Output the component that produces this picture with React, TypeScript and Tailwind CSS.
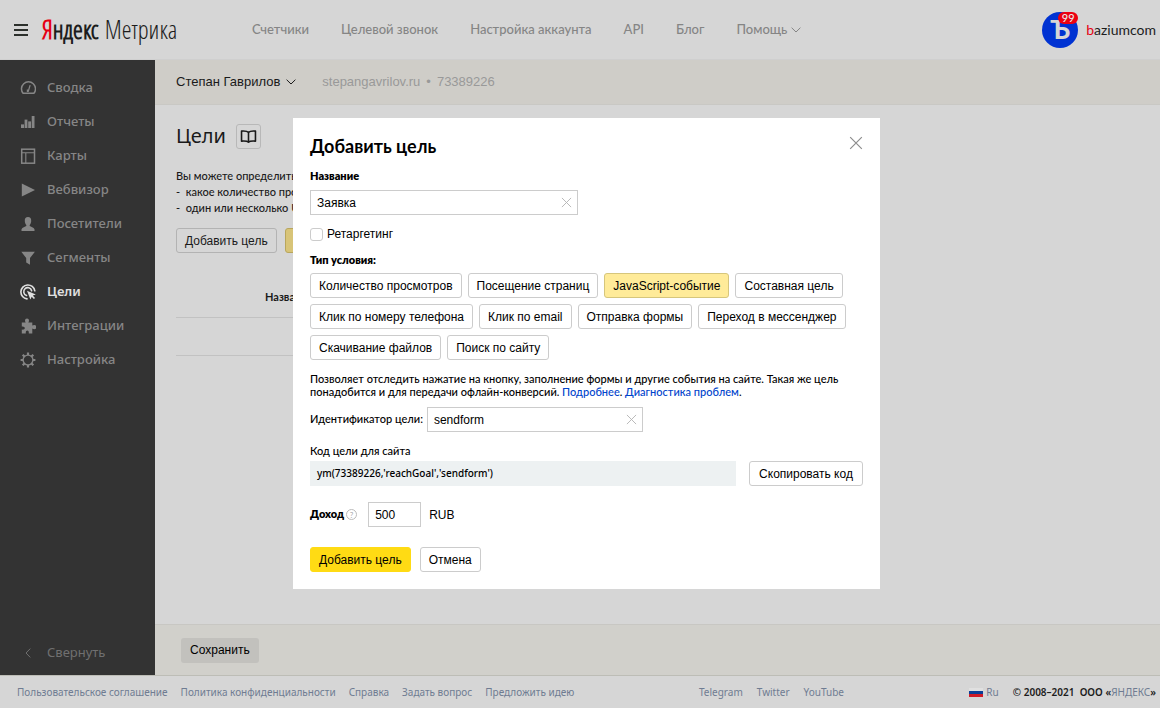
import React, { useState } from "react";

const noto = "font-['Noto_Sans','Open_Sans',sans-serif]";
const lato = "font-['Lato','Noto_Sans',sans-serif]";
const arial = "font-['Liberation_Sans',Arial,sans-serif]";

function Chevron({ className }: { className: string }) {
  return (
    <svg viewBox="0 0 10 6" fill="none" stroke="currentColor" className={className} aria-hidden="true">
      <path d="M0.6 0.7 5 5 9.4 0.7" />
    </svg>
  );
}

function Cross({ className }: { className: string }) {
  return (
    <svg viewBox="0 0 12 12" fill="none" stroke="currentColor" className={className} aria-hidden="true">
      <path d="M1 1 11 11M11 1 1 11" />
    </svg>
  );
}

const icons: Record<string, React.ReactNode> = {
  gauge: (
    <g fill="none" stroke="currentColor">
      <path d="M3.1 13.300A7 7 0 1 1 13.900 13.300Z" strokeWidth="1.5" strokeLinejoin="round" />
      <path d="M10 5.500 8.200 11.500" strokeWidth="1.2" strokeLinecap="round" />
      <path d="M7.400 9.400V12" strokeWidth="1.2" />
    </g>
  ),
  bars: (
    <g fill="currentColor">
      <rect x="1" y="10.400" width="3" height="3.600" />
      <rect x="4.600" y="5.600" width="2.800" height="8.400" />
      <rect x="8.200" y="7.400" width="2.800" height="6.600" />
      <rect x="11.700" y="2" width="2.800" height="12" />
    </g>
  ),
  layout: (
    <g fill="none" stroke="currentColor">
      <rect x="1.700" y="1.200" width="12.800" height="14" strokeWidth="1.500" />
      <path d="M1.700 4.800H14.500M5.800 4.800V15" strokeWidth="1.100" />
    </g>
  ),
  play: <path d="M1.8 1.4 15 8 1.8 14.6Z" fill="currentColor" />,
  person: (
    <path
      d="M8 1C5.8 1 4.6 2.5 4.8 5c.1 1.700.6 3 1.500 3.900v1.200c-1 .9-4.100 1.200-4.800 3.200V15h13v-1.700c-.7-2-3.800-2.300-4.800-3.200V8.900c.9-.9 1.400-2.200 1.500-3.900C11.400 2.500 10.200 1 8 1Z"
      fill="currentColor"
    />
  ),
  funnel: <path d="M1.300 1.800H14.900L10 8V14.800L6.200 12.500V8Z" fill="currentColor" />,
  target: (
    <g fill="none" stroke="currentColor" strokeWidth="1.6">
      <path d="M14.800 6.800A7 7 0 1 0 7 14.900" strokeLinecap="round" />
      <path d="M11.600 6.700A4 4 0 1 0 6.500 11.500" strokeLinecap="round" />
      <path d="M7 6.800 15.800 10.500 12.800 11.600 15 14 13.900 15 11.700 12.800 10.400 15.600Z" fill="currentColor" stroke="none" />
    </g>
  ),
  puzzle: (
    <path
      d="M1.800 4.400H5.700C5.200 3.700 5 3.100 5 2.500A2 2 0 0 1 9 2.500C9 3.100 8.800 3.700 8.300 4.400H12.300V7.500C13 7.200 13.500 7 14.200 7A2.100 2.100 0 0 1 14.200 11.200C13.500 11.200 13 11 12.300 10.600V15.500H8.800C9 13.500 8.300 12.600 7.300 12.600S5.600 13.500 5.800 15.500H1.800V11.600C3.700 11.900 4.800 11.200 4.800 10.100S3.700 8.200 1.800 8.500Z"
      fill="currentColor"
    />
  ),
  gear: (
    <g stroke="currentColor" fill="none">
      <circle cx="8" cy="8" r="4.900" strokeWidth="1.400" />
      <path
        d="M8 3V.6M8 13V15.400M3 8H.6M13 8H15.400M4.500 4.500 2.700 2.700M11.500 4.500 13.300 2.700M4.500 11.500 2.700 13.300M11.500 11.500 13.300 13.300"
        strokeWidth="2.200"
      />
    </g>
  ),
};

const menu = [
  { icon: "gauge", label: "Сводка" },
  { icon: "bars", label: "Отчеты" },
  { icon: "layout", label: "Карты" },
  { icon: "play", label: "Вебвизор" },
  { icon: "person", label: "Посетители" },
  { icon: "funnel", label: "Сегменты" },
  { icon: "target", label: "Цели", active: true },
  { icon: "puzzle", label: "Интеграции" },
  { icon: "gear", label: "Настройка" },
];

const conditions = [
  "Количество просмотров",
  "Посещение страниц",
  "JavaScript-событие",
  "Составная цель",
  "Клик по номеру телефона",
  "Клик по email",
  "Отправка формы",
  "Переход в мессенджер",
  "Скачивание файлов",
  "Поиск по сайту",
];

const button = "h-[25px] shrink-0 whitespace-nowrap rounded-[3px] border px-2 text-[12px] leading-none " + arial;
const field = "h-[25px] border border-[#ccc] bg-white px-1.5 text-[12px] text-black outline-none " + arial;

function ClearableField(props: { id: string; value: string; onChange: (v: string) => void; width: string; clear: string }) {
  return (
    <div className={"relative " + props.width}>
      <input
        id={props.id}
        value={props.value}
        onChange={(e) => props.onChange(e.target.value)}
        className={field + " w-full"}
      />
      <button
        type="button"
        aria-label={props.clear}
        onClick={() => props.onChange("")}
        className="absolute inset-y-0 right-1.5 flex items-center text-[#b3b3b3]"
      >
        <Cross className="size-[11px]" />
      </button>
    </div>
  );
}

function Header() {
  return (
    <header className="flex h-[60px] shrink-0 items-center border-b border-[#cfcfcf] bg-[#d6d6d6] pl-3.5 pr-1">
      <button type="button" aria-label="Меню" className="flex w-3.5 flex-col gap-[3px]">
        <span className="h-0.5 bg-[#2c302c]" />
        <span className="h-0.5 bg-[#2c302c]" />
        <span className="h-0.5 bg-[#2c302c]" />
      </button>
      <a
        href="#"
        className="ml-3.5 flex w-[210px] gap-1.5 whitespace-nowrap pb-0.5 font-['Open_Sans_Condensed_Light','Open_Sans_Condensed',sans-serif] text-[25px] leading-8 text-[#1c1c1c]"
      >
        <span className="font-bold">
          <span className="text-[#e60012]">Я</span>ндекс
        </span>
        <span>Метрика</span>
      </a>
      <nav className="flex items-center gap-8 whitespace-nowrap text-[13px] font-medium text-[#858585]">
        <a href="#">Счетчики</a>
        <a href="#">Целевой звонок</a>
        <a href="#">Настройка аккаунта</a>
        <a href="#">API</a>
        <a href="#">Блог</a>
        <a href="#" className="flex items-center gap-1">
          Помощь
          <Chevron className="h-1.5 w-2.5" />
        </a>
      </nav>
      <a href="#" className="ml-auto flex items-center gap-2 text-[14px] text-[#1c1c1c]">
        <span className="relative flex size-9 items-center justify-center rounded-full bg-[#0032d2]">
          <span className="font-['Roboto',sans-serif] text-[26px] font-bold leading-none text-[#d6d6d6]">Ъ</span>
          <span className="absolute right-0 top-0 flex h-3 w-5 items-center justify-center rounded-full bg-[#ec0010] text-[11px] font-medium leading-none text-[#e8e8e8]">
            99
          </span>
        </span>
        <span>
          <span className="text-[#e60012]">b</span>aziumcom
        </span>
      </a>
    </header>
  );
}

function Sidebar() {
  return (
    <aside className={"flex w-[155px] shrink-0 flex-col bg-[#333] pt-[11px] text-[13px] font-medium text-[#868686] " + noto}>
      <nav className="flex flex-col">
        {menu.map((m) => (
          <a
            key={m.label}
            href="#"
            className={"flex h-[34px] items-center gap-[11px] pl-5 " + (m.active ? "font-semibold text-[#e0e0e0]" : "")}
          >
            <svg viewBox="0 0 16 16" className="size-4" aria-hidden="true">
              {icons[m.icon]}
            </svg>
            {m.label}
          </a>
        ))}
      </nav>
      <button type="button" className="mt-auto flex h-11 items-center gap-[11px] pl-5 font-normal text-[#707070]">
        <span className="flex w-4 justify-center">
          <Chevron className="h-1.5 w-2.5 rotate-90" />
        </span>
        Свернуть
      </button>
    </aside>
  );
}

function Goals() {
  return (
    <main className="flex min-w-0 flex-1 flex-col">
      <div className={"flex h-[45px] items-center gap-[26px] border-b border-[#c9c8c4] bg-[#cfcdc8] px-[21px] " + arial}>
        <button type="button" className="flex items-center gap-1.5 text-[13px] text-[#1a1a1a]">
          Степан Гаврилов
          <Chevron className="h-1.5 w-2.5" />
        </button>
        <span className="flex gap-1.5 text-[13px] text-[#999]">
          <span>stepangavrilov.ru</span>
          <span>•</span>
          <span>73389226</span>
        </span>
      </div>
      <section className="flex max-w-[700px] flex-1 flex-col items-start px-[21px] pt-4 text-[#1a1a1a]">
        <div className="flex items-center gap-2.5">
          <h1 className={"text-[20px] leading-[30px] " + noto}>Цели</h1>
          <button
            type="button"
            aria-label="Справка"
            className="flex h-[25px] w-[25px] items-center justify-center rounded-[3px] border border-[#b8b8b8]"
          >
            <svg
              viewBox="0 0 18 14"
              fill="none"
              stroke="currentColor"
              strokeWidth="1.700"
              strokeLinejoin="round"
              className="h-[13px] w-[17px]"
              aria-hidden="true"
            >
              <path d="M9 2.500C7.500 1 4.500 1 1.500 1.200V12C4.500 11.800 7.500 11.800 9 13 10.500 11.800 13.500 11.800 16.500 12V1.200C13.500 1 10.500 1 9 2.500ZM9 2.500V13" />
            </svg>
          </button>
        </div>
        <div className="mt-[17px] whitespace-nowrap text-[11px] font-medium leading-4">
          <p>Вы можете определить</p>
          <ul>
            <li>-&nbsp; какое количество просмотров</li>
            <li>-&nbsp; один или несколько URL</li>
          </ul>
        </div>
        <div className="mt-3 flex gap-2">
          <button type="button" className={button + " border-[#b3b3b3]"}>Добавить цель</button>
          <button type="button" aria-label="Отчет" className={button + " w-20 border-[#b9a65c] bg-[#d8c478]"} />
        </div>
        <table className="mt-6 w-full text-[11px]">
          <thead>
            <tr className="h-10 border-b border-[#c2c2c2]">
              <th scope="col" className="pl-[89px] text-left font-bold">Название</th>
            </tr>
          </thead>
          <tbody>
            <tr className="h-[38px] border-b border-[#c2c2c2]">
              <td />
            </tr>
          </tbody>
        </table>
      </section>
      <div className="flex h-[51px] items-center border-t border-[#c8c7c3] bg-[#d1d0cb] px-[26px]">
        <button type="button" className={button + " border-transparent bg-[#c2c1bd] text-black"}>Сохранить</button>
      </div>
    </main>
  );
}

function Footer() {
  return (
    <footer
      className={
        "flex h-[33px] shrink-0 items-center whitespace-nowrap border-t border-[#bdbdb6] bg-[#d6d6d6] pl-[17px] pr-1 text-[10px] text-[#6f7c92] " +
        noto
      }
    >
      <div className="flex w-[682px] gap-[13px]">
        <a href="#">Пользовательское соглашение</a>
        <a href="#">Политика конфиденциальности</a>
        <a href="#">Справка</a>
        <a href="#">Задать вопрос</a>
        <a href="#">Предложить идею</a>
      </div>
      <div className="flex gap-3.5">
        <a href="#">Telegram</a>
        <a href="#">Twitter</a>
        <a href="#">YouTube</a>
      </div>
      <div className="ml-auto flex items-center gap-3.5">
        <a href="#" className="flex items-center gap-[3px]">
          <span className="flex h-[9px] w-3.5 flex-col">
            <span className="flex-1 bg-[#e0e0e0]" />
            <span className="flex-1 bg-[#0b3f97]" />
            <span className="flex-1 bg-[#cf1a26]" />
          </span>
          Ru
        </a>
        <span className="font-semibold text-[#1c1c1c]">
          © 2008–2021&nbsp; ООО «<a href="#" className="font-normal text-[#6f7c92]">ЯНДЕКС</a>»
        </span>
      </div>
    </footer>
  );
}

function GoalDialog() {
  const [name, setName] = useState("Заявка");
  const [ident, setIdent] = useState("sendform");
  const [type, setType] = useState("JavaScript-событие");
  const [price, setPrice] = useState("500");
  return (
    <div className="absolute inset-0 flex items-start justify-center pl-[13px] pt-[118px]">
      <form
        role="dialog"
        aria-labelledby="goal-title"
        onSubmit={(e) => e.preventDefault()}
        className="flex w-[587px] flex-col bg-white px-[17px] pb-[17px] pt-3.5 text-[11px] text-black"
      >
        <div className="flex items-start justify-between">
          <h2 id="goal-title" className="text-[18px] font-bold leading-7">Добавить цель</h2>
          <button type="button" aria-label="Закрыть" className="mt-1 text-[#8c8c8c]">
            <Cross className="size-3.5" />
          </button>
        </div>
        <label htmlFor="goal-name" className="mt-2 font-extrabold leading-4">Название</label>
        <div className="mt-1.5 flex">
          <ClearableField id="goal-name" value={name} onChange={setName} width="w-[268px]" clear="Очистить название" />
        </div>
        <label className={"mt-[11px] flex items-center gap-1 text-[12px] leading-4 " + arial}>
          <input
            type="checkbox"
            className="size-[13px] appearance-none rounded-[3px] border border-[#ccc] bg-white checked:bg-[#ffdb14]"
          />
          Ретаргетинг
        </label>
        <p className="mt-2.5 font-extrabold leading-4">Тип условия:</p>
        <div className="mt-[5px] flex flex-wrap gap-1.5">
          {conditions.map((c) => (
            <button
              key={c}
              type="button"
              aria-pressed={type === c}
              onClick={() => setType(c)}
              className={button + (type === c ? " border-[#d6c67c] bg-[#ffeb99]" : " border-[#ccc] bg-white")}
            >
              {c}
            </button>
          ))}
        </div>
        <p className="mt-3 font-medium leading-[13px]">
          Позволяет отследить нажатие на кнопку, заполнение формы и другие события на сайте. Такая же цель
          понадобится и для передачи офлайн-конверсий. <a href="#" className="text-[#0044cc]">Подробнее</a>.{" "}
          <a href="#" className="text-[#0044cc]">Диагностика проблем</a>.
        </p>
        <div className="mt-[9px] flex items-center gap-1">
          <label htmlFor="goal-id" className="font-medium">Идентификатор цели:</label>
          <ClearableField id="goal-id" value={ident} onChange={setIdent} width="w-[216px]" clear="Очистить идентификатор" />
        </div>
        <p className="mt-[11px] font-medium leading-4">Код цели для сайта</p>
        <div className="mt-0.5 flex gap-[13px]">
          <code className={"flex h-[25px] flex-1 items-center bg-[#edf1f2] px-[7px] text-[10px] font-medium " + noto}>
            ym(73389226,'reachGoal','{ident}')
          </code>
          <button type="button" className={button + " min-w-[114px] border-[#ccc] bg-white"}>Скопировать код</button>
        </div>
        <div className="mt-4 flex items-center">
          <label htmlFor="goal-price" className="font-extrabold">Доход</label>
          <span className="ml-0.5 flex size-[11px] items-center justify-center rounded-full border border-[#bbb] text-[8px] leading-none text-[#aaa]">
            ?
          </span>
          <input
            id="goal-price"
            value={price}
            onChange={(e) => setPrice(e.target.value)}
            className={field + " ml-[11px] w-[53px]"}
          />
          <span className={"ml-2 text-[12px] " + arial}>RUB</span>
        </div>
        <div className="mt-5 flex gap-[9px]">
          <button type="submit" className={button + " border-[#ffdb14] bg-[#ffdb14]"}>Добавить цель</button>
          <button type="button" className={button + " border-[#ccc] bg-white"}>Отмена</button>
        </div>
      </form>
    </div>
  );
}

export default function App() {
  return (
    <div className={"relative flex min-h-screen flex-col bg-[#d6d6d6] " + lato}>
      <Header />
      <div className="flex flex-1">
        <Sidebar />
        <Goals />
      </div>
      <Footer />
      <GoalDialog />
    </div>
  );
}
